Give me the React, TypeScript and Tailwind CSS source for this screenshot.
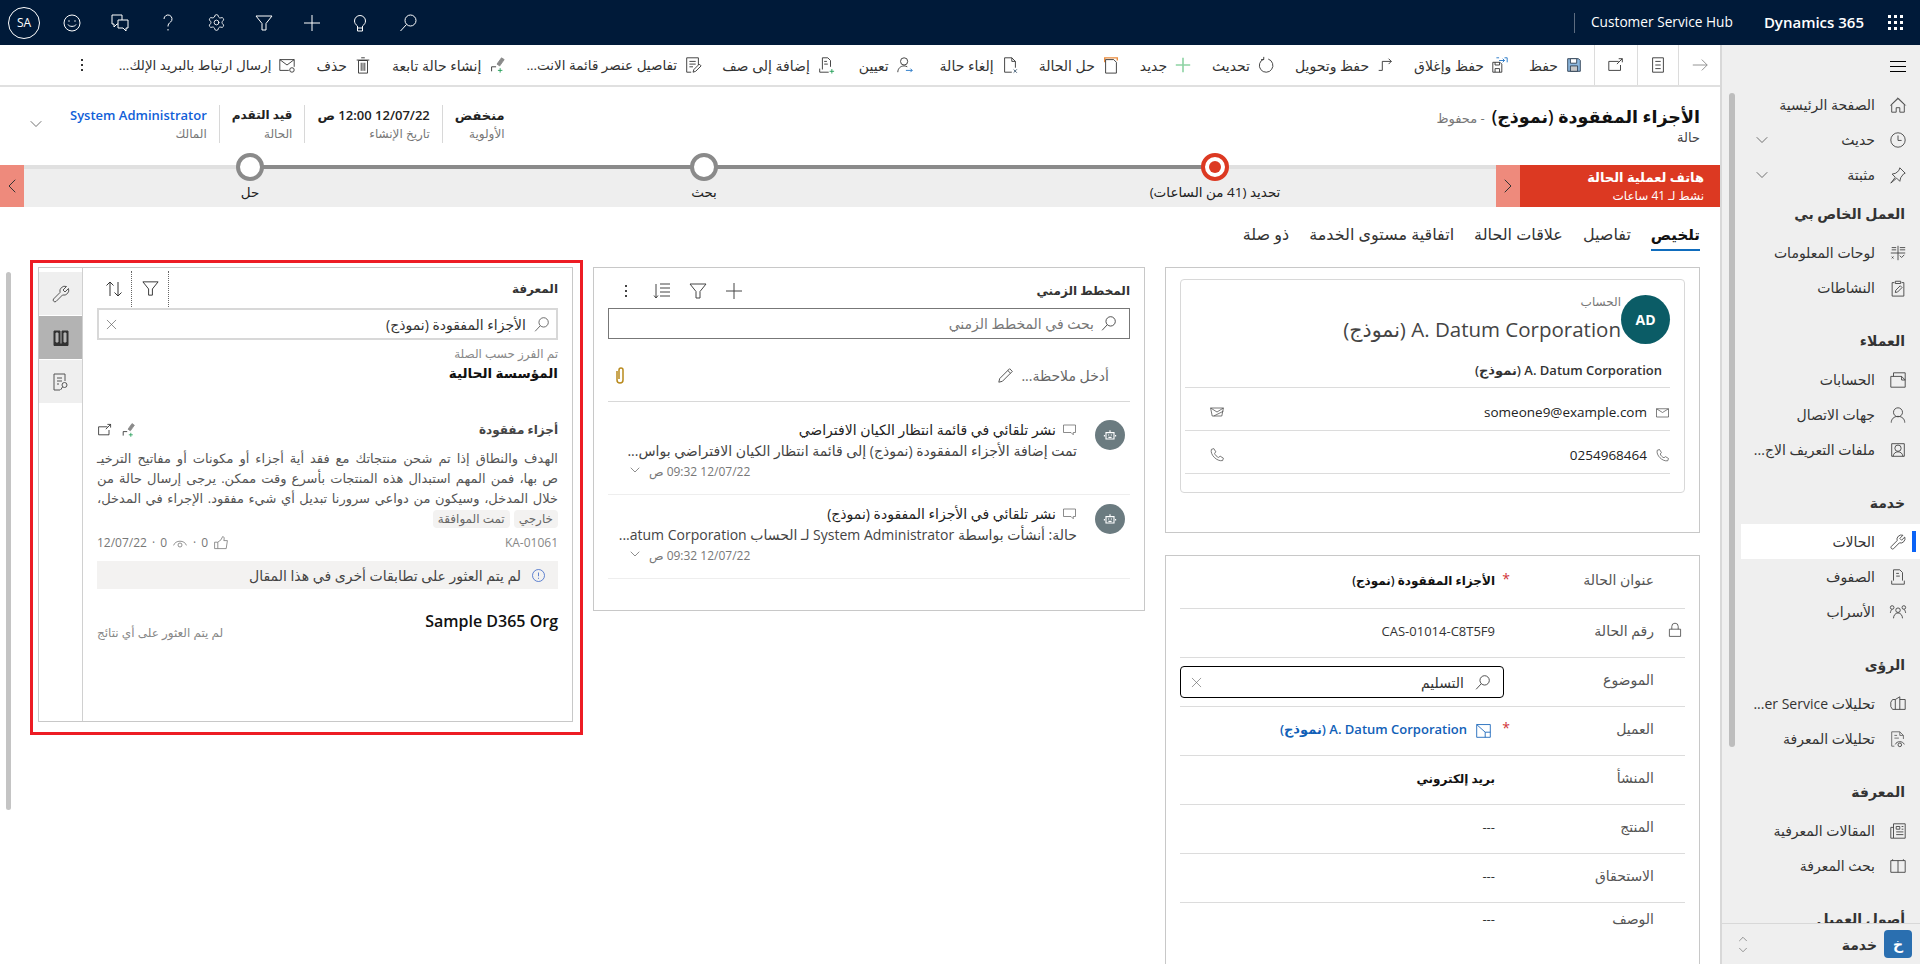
import type { ReactNode } from "react";
import { ChevronDown, ChevronLeft, ChevronRight, ChevronUp, Settings } from "lucide-react";

type IconProps = { className?: string };

const Ico = ({ className = "size-4", children }: IconProps & { children: ReactNode }) => (
  <svg viewBox="0 0 20 20" fill="none" stroke="currentColor" strokeWidth="1" className={`shrink-0 ${className}`}>
    {children}
  </svg>
);

// shell icons
const SearchIcon = (p: IconProps) => <Ico {...p}><circle cx="12.5" cy="7.5" r="5.5" /><path d="M8.5 11.5L2.5 18" /></Ico>;
const CloseIcon = (p: IconProps) => <Ico {...p}><path d="M3 3l14 14M17 3L3 17" /></Ico>;
const FilterIcon = (p: IconProps) => <Ico {...p}><path d="M2 3h16l-6 7.5V17H8v-6.5z" /></Ico>;
const PlusIcon = (p: IconProps) => <Ico {...p}><path d="M10 2v16M2 10h16" /></Ico>;
const SmileIcon = (p: IconProps) => <Ico {...p}><circle cx="10" cy="10" r="8" /><path d="M6 11.5c1 2.500 7 2.500 8 0" /><path d="M7 7.500v1M13 7.500v1" strokeWidth="1.5" /></Ico>;
const FeedbackIcon = (p: IconProps) => <Ico {...p}><path d="M12 7V2H2v9h2v3l3-3h1" /><path d="M8 7h10v8h-2v3l-3-3H8z" /></Ico>;
const QuestionIcon = (p: IconProps) => <Ico {...p}><path d="M6 6a4 4 0 1 1 6.500 3.100C11 10.300 10 11.200 10 13.500M10 16v1.500" /></Ico>;
const BulbIcon = (p: IconProps) => <Ico {...p}><path d="M7.500 13C5.500 11.500 4.500 9.800 4.500 8a5.500 5.500 0 0 1 11 0c0 1.800-1 3.500-3 5v5h-5z" /><path d="M7.500 15h5" /></Ico>;
const GridDots = () => (
  <div className="grid grid-cols-3 gap-[3px]">
    {Array.from({ length: 9 }).map((_, i) => <span key={i} className="size-[3px] bg-white" />)}
  </div>
);

// command bar icons
const SaveIcon = (p: IconProps) => <Ico {...p}><path d="M3 3h12l2 2v12H3z" fill="#8db8df" stroke="#2e3f52" /><path d="M6 3h7v5H6z" fill="#fff" stroke="#2e3f52" /><path d="M6 11h8v6H6z" fill="#c8c8c8" stroke="#2e3f52" /></Ico>;
const SaveCloseIcon = (p: IconProps) => <Ico {...p}><path d="M2 7h8l2 2v9H2z" /><path d="M4.500 7v3h5V7M4.500 18v-4h5v4" /><path d="M6 2h3M15 2h3v5M9 5h6M13 3l2 2-2 2" stroke="#1f73c5" /></Ico>;
const RouteIcon = (p: IconProps) => <Ico {...p}><path d="M3 16h4V6h10M14 3l3 3-3 3" /></Ico>;
const RefreshIcon = (p: IconProps) => <Ico {...p}><path d="M12.500 3.400a7.500 7.500 0 1 1-5 .1M7.500 1v3h-3" /></Ico>;
const NewIcon = (p: IconProps) => <Ico {...p}><path d="M10 2v16M2 10h16" stroke="#8ed3a4" strokeWidth="1.800" /></Ico>;
const ResolveIcon = (p: IconProps) => <Ico {...p}><path d="M3 7V2h14v3" stroke="#ea8a3a" strokeWidth="1.500" /><path d="M4 4h9l3 3v12H4z" /></Ico>;
const CancelIcon = (p: IconProps) => <Ico {...p}><path d="M12 18H4V2h8l4 4v7M12 2v4h4" /><path d="M14 15l3.500 3.500M17.500 15L14 18.500" stroke="#38536d" /></Ico>;
const AssignIcon = (p: IconProps) => <Ico {...p}><circle cx="9" cy="6" r="4" /><path d="M2 18c0-4 3-7 7-7 1.500 0 2.500.4 3.500 1" /><path d="M11 16h7M16 14l2 2-2 2" stroke="#1f73c5" /></Ico>;
const QueueIcon = (p: IconProps) => <Ico {...p}><path d="M6 15V2h6l3 3v7M8 6h3M8 9h4" /><path d="M3 14v4h10" /><path d="M14 17h5M16.500 14.500v5" stroke="#1f9d55" /></Ico>;
const DetailsIcon = (p: IconProps) => <Ico {...p}><path d="M8 18H3V2h13v8M6 6h7M6 9h7M6 12h4" /><path d="M10 18l1-3 6-6 2 2-6 6z" /></Ico>;
const ChildIcon = (p: IconProps) => <Ico {...p}><path d="M10 9l5-7 3 2-5 7z" fill="#8a8a8a" stroke="#8a8a8a" /><path d="M4 17v-5h5" /><path d="M11 16h5M13.500 13.500v5" stroke="#1f9d55" /></Ico>;
const TrashIcon = (p: IconProps) => <Ico {...p}><path d="M5 5h10v14H5zM3 4.500h14M8 2h4M8 7.500v9M10 7.500v9M12 7.500v9" /></Ico>;
const MailLinkIcon = (p: IconProps) => <Ico {...p}><path d="M12 16H2V4h16v8M2 4l8 6 8-6" /><circle cx="15.500" cy="15.500" r="2.500" /></Ico>;
const FormIcon = (p: IconProps) => <Ico {...p}><path d="M4 2h12v16H4zM7 6h6M7 10h6M7 14h6" /></Ico>;
const PopoutIcon = (p: IconProps) => <Ico {...p}><path d="M13 6H2v10h13v-6M11 9l6-6M13 3h4v4" /></Ico>;
const ForwardIcon = (p: IconProps) => <Ico {...p}><path d="M2 10h16M12 4l6 6-6 6" /></Ico>;

// sidebar icons
const HomeIcon = (p: IconProps) => <Ico {...p}><path d="M10 3L3 9.500V18h5v-5h4v5h5V9.500zM1.500 10.500L10 2l8.500 8.500" /></Ico>;
const ClockIcon = (p: IconProps) => <Ico {...p}><circle cx="10" cy="10" r="8" /><path d="M10 5v5.500h4" /></Ico>;
const PinIcon = (p: IconProps) => <Ico {...p}><path d="M12 2l6 6-2 1-3 4-1 4-3.500-3.500L2 19l5-6.500L3.500 9l4-1 3.500-3z" /></Ico>;
const DashIcon = (p: IconProps) => <Ico {...p}><path d="M10 2v16M2 10h16M3 4h5M3 6.500h5M12 4h6M12 6.500h6M12 13l2 2 3-3M3 14l2 2M5 14l-2 2" /></Ico>;
const ClipboardIcon = (p: IconProps) => <Ico {...p}><path d="M6 4H3.500v15h13V4H14M7 2.500h6V5H7zM7 15l.5-2.500 5-5 2 2-5 5z" /></Ico>;
const AccountsIcon = (p: IconProps) => <Ico {...p}><path d="M2 6h12l4 4v8H2zM5 6V2h13v8M14 6v4h4" /></Ico>;
const ContactIcon = (p: IconProps) => <Ico {...p}><circle cx="10" cy="7" r="5" /><path d="M2.500 18.500c0-4 3-7 7.500-7s7.500 3 7.500 7" /></Ico>;
const ProfileIcon = (p: IconProps) => <Ico {...p}><path d="M3 3h14v14H3z" /><circle cx="10" cy="8" r="3.500" /><path d="M4.500 17c.5-3 2.500-5 5.500-5s5 2 5.500 5" /></Ico>;
const WrenchIcon = (p: IconProps) => <Ico {...p}><path d="M17.500 4.500L14 8l-2-2 3.500-3.500A5 5 0 0 0 9 8.500L2.500 15a1.800 1.800 0 0 0 2.500 2.500l6.500-6.500a5 5 0 0 0 6-6.500z" /></Ico>;
const QueuesIcon = (p: IconProps) => <Ico {...p}><path d="M5 14V2h7l3 3v9M8 6h3M8 9h4M3 14v4h14v-4" /></Ico>;
const SwarmIcon = (p: IconProps) => <Ico {...p}><circle cx="10" cy="8" r="2.500" /><circle cx="3.500" cy="5" r="2" /><circle cx="16.500" cy="5" r="2" /><path d="M5 17c0-3 2-6 5-6s5 3 5 6M1.500 11c.3-2 1-3.500 2-4M18.500 11c-.3-2-1-3.500-2-4" /></Ico>;
const InsightIcon = (p: IconProps) => <Ico {...p}><path d="M7 5l5-3v14M7 5H4l-2 3v5l2 3h14V5h-6M7 5v11" /></Ico>;
const DocEyeIcon = (p: IconProps) => <Ico {...p}><path d="M6 18H3V2h9l4 4v4M12 2v4h4M6 6h3M6 9h5" stroke="#666" /><path d="M7 16c1.500-4 8.500-4 10 0" /><circle cx="12" cy="16.500" r="2" /></Ico>;
const ArticlesIcon = (p: IconProps) => <Ico {...p}><path d="M5 2h13v16H5zM5 6H2v12h3M8 5h4v3H8zM14 5h2M14 8h2M8 11h8M8 14h8" /></Ico>;
const BookIcon = (p: IconProps) => <Ico {...p}><path d="M10 4H2v13h8zM10 4h8v13h-8M4 2.500v1.500M16 2.500v1.500" /></Ico>;

// record icons
const PhoneIcon = (p: IconProps) => <Ico {...p}><path d="M3 3l3-1 2.500 4L7 8c.5 2 3 4.500 5 5l2-1.500 4 2.500-1 3c-7 1.500-16-7.500-14-14z" /></Ico>;
const MailIcon = (p: IconProps) => <Ico {...p}><path d="M2 5h16v11H2zM2 5l8 5 8-5" /></Ico>;
const EmailSendIcon = (p: IconProps) => <Ico {...p}><path d="M2 5h16l-2 10H4zM2 5l8 5 8-5M6 15l12-6" /></Ico>;
const LockIcon = (p: IconProps) => <Ico {...p}><path d="M3 9h14v9H3zM6 9V5.500a4 4 0 0 1 8 0V9" /></Ico>;
const LookupIcon = (p: IconProps) => <Ico {...p}><path d="M2 3h16v15H2zM2 3l10 9h6M12 12v6" /></Ico>;
const SortIcon = (p: IconProps) => <Ico {...p}><path d="M6 17V3M2.500 6.500L6 3l3.500 3.500M14 3v14M10.500 13.500L14 17l3.500-3.500" /></Ico>;
const TimelineSortIcon = (p: IconProps) => <Ico {...p}><path d="M8 3h10M8 7h10M8 11h10M8 15h10M4 3v14M2 14.500L4 17l2-2.500" /></Ico>;
const PencilIcon = (p: IconProps) => <Ico {...p}><path d="M3 14L14 3l3 3L6 17l-4 1zM12 5l3 3" /></Ico>;
const ClipIcon = (p: IconProps) => <Ico {...p}><path d="M7 6v9a3 3 0 0 0 6 0V5a2 2 0 0 0-4 0v9" stroke="#b98a1d" strokeWidth="1.500" /></Ico>;
const ChatIcon = (p: IconProps) => <Ico {...p}><path d="M2 4h16v10h-3v3l-3-3H2z" /></Ico>;
const BotIcon = (p: IconProps) => <Ico {...p}><path d="M5 7h10v8H5zM10 4v3M3 10v2M17 10v2" stroke="#fff" strokeWidth="1.400" /><path d="M7.500 10h1.500M11 10h1.500M8 13h4" stroke="#fff" strokeWidth="1.400" /></Ico>;
const InfoIcon = (p: IconProps) => <Ico {...p}><circle cx="10" cy="10" r="8" stroke="#2f5ec4" /><path d="M10 6v5M10 13v1.500" stroke="#2f5ec4" /></Ico>;
const EyeIcon = (p: IconProps) => <Ico {...p}><path d="M2 13c2-7 14-7 16 0" /><circle cx="10" cy="12.500" r="2.500" /></Ico>;
const ThumbIcon = (p: IconProps) => <Ico {...p}><path d="M6 17H2V9h4zM6 9l4-3 2-4c2 0 2.500 2 1.500 5H18l-1.500 10H6" /></Ico>;
const BookTabIcon = (p: IconProps) => <Ico {...p}><path d="M3 3h6v13H3zM11 3h6v13h-6zM3 16h14v1.500H3z" fill="#333" stroke="#333" /><path d="M5 5h2v9H5zM13 5h2v9h-2z" fill="#b3b3b3" stroke="#b3b3b3" /></Ico>;
const SearchDocIcon = (p: IconProps) => <Ico {...p}><path d="M9 18H3V2h11v7M6 6h5M6 9h5M6 12h2" /><circle cx="13.500" cy="13" r="2.500" /><path d="M11.500 15l-2 3" /></Ico>;

const commands: { label: string; icon: (p: IconProps) => ReactNode; cls?: string }[] = [
  { label: "حفظ", icon: SaveIcon },
  { label: "حفظ وإغلاق", icon: SaveCloseIcon },
  { label: "حفظ وتحويل", icon: RouteIcon },
  { label: "تحديث", icon: RefreshIcon },
  { label: "جديد", icon: NewIcon },
  { label: "حل الحالة", icon: ResolveIcon },
  { label: "إلغاء حالة", icon: CancelIcon },
  { label: "تعيين", icon: AssignIcon, cls: "ms-[6px]" },
  { label: "إضافة إلى صف", icon: QueueIcon, cls: "ms-[4px]" },
  { label: "تفاصيل عنصر قائمة الانت...", icon: DetailsIcon, cls: "text-[13.5px]" },
  { label: "إنشاء حالة تابعة", icon: ChildIcon },
  { label: "حذف", icon: TrashIcon },
  { label: "إرسال ارتباط بالبريد الإلك...", icon: MailLinkIcon, cls: "text-[13.5px]" },
];

type NavItem = { label: string; icon: (p: IconProps) => ReactNode; chevron?: boolean; active?: boolean };
type NavGroup = { title?: string; items: NavItem[] };

const nav: NavGroup[] = [
  {
    items: [
      { label: "الصفحة الرئيسية", icon: HomeIcon },
      { label: "حديث", icon: ClockIcon, chevron: true },
      { label: "مثبتة", icon: PinIcon, chevron: true },
    ],
  },
  {
    title: "العمل الخاص بي",
    items: [
      { label: "لوحات المعلومات", icon: DashIcon },
      { label: "النشاطات", icon: ClipboardIcon },
    ],
  },
  {
    title: "العملاء",
    items: [
      { label: "الحسابات", icon: AccountsIcon },
      { label: "جهات الاتصال", icon: ContactIcon },
      { label: "ملفات التعريف الاج...", icon: ProfileIcon },
    ],
  },
  {
    title: "خدمة",
    items: [
      { label: "الحالات", icon: WrenchIcon, active: true },
      { label: "الصفوف", icon: QueuesIcon },
      { label: "الأسراب", icon: SwarmIcon },
    ],
  },
  {
    title: "الرؤى",
    items: [
      { label: "تحليلات er Service...", icon: InsightIcon },
      { label: "تحليلات المعرفة", icon: DocEyeIcon },
    ],
  },
  {
    title: "المعرفة",
    items: [
      { label: "المقالات المعرفية", icon: ArticlesIcon },
      { label: "بحث المعرفة", icon: BookIcon },
    ],
  },
  { title: "أصول العميل", items: [] },
];

const TopBar = () => (
  <div dir="ltr" className="flex h-[45px] shrink-0 items-center bg-[#001a39] text-white">
    <div className="flex h-full w-[48px] items-center justify-center">
      <div className="flex size-[32px] items-center justify-center rounded-full border border-white text-[12px]">SA</div>
    </div>
    {[SmileIcon, FeedbackIcon, QuestionIcon].map((I, i) => (
      <div key={i} className="flex h-full w-[48px] items-center justify-center"><I className="size-[20px]" /></div>
    ))}
    <div className="flex h-full w-[48px] items-center justify-center"><Settings strokeWidth={1.1} className="size-[19px]" /></div>
    {[FilterIcon, PlusIcon, BulbIcon, SearchIcon].map((I, i) => (
      <div key={i} className="flex h-full w-[48px] items-center justify-center"><I className="size-[20px]" /></div>
    ))}
    <div className="flex-1" />
    <div className="h-[20px] w-px bg-[#5d6c80]" />
    <span className="ms-4 text-[13.7px]">Customer Service Hub</span>
    <span className="ms-[31px] text-[15px] font-semibold">Dynamics 365</span>
    <div className="ms-[24px] me-[17px]"><GridDots /></div>
  </div>
);

const CommandBar = () => (
  <div className="flex h-[42px] shrink-0 items-center border-b-2 border-[#e0e0e0] text-[14px] text-[#333]">
    <div className="flex h-full w-[42px] items-center justify-center border-e border-[#dcdcdc] text-[#888]"><ForwardIcon className="size-[18px]" /></div>
    <div className="flex h-full w-[41px] items-center justify-center border-e border-[#dcdcdc]"><FormIcon className="size-[18px]" /></div>
    <div className="flex h-full w-[43px] items-center justify-center border-e border-[#dcdcdc]"><PopoutIcon className="size-[18px]" /></div>
    <div className="flex items-center ps-[1px]">
      {commands.map(({ label, icon, cls }) => (
        <div key={label} className={`flex items-center gap-[7px] px-[10px] whitespace-nowrap ${cls ?? ""}`}>
          {icon({ className: "size-[18px]" })}
          <span>{label}</span>
        </div>
      ))}
    </div>
    <div className="me-[81px] ms-auto flex flex-col gap-[3px]">
      {[0, 1, 2].map((i) => <span key={i} className="size-[2px] bg-[#333]" />)}
    </div>
  </div>
);

const HeaderField = ({ value, label, tone = "text-[13px] text-[#222]", last }: { value: string; label: string; tone?: string; last?: boolean }) => (
  <div className={`flex h-[38px] flex-col justify-center px-[12px] ${last ? "" : "border-e border-[#d8d8d8]"}`}>
    <span className={`font-semibold leading-[20px] whitespace-nowrap ${tone}`}>{value}</span>
    <span className="text-[12px] leading-[18px] text-[#777]">{label}</span>
  </div>
);

const RecordHeader = () => (
  <div className="flex h-[78px] shrink-0 items-center justify-between ps-5 pe-[26px]">
    <div className="-mt-[5px]">
      <div className="flex items-baseline gap-[7px] whitespace-nowrap">
        <span className="text-[17.5px] font-semibold leading-[26px] text-[#111]">الأجزاء المفقودة (نموذج)</span>
        <span className="text-[13px] text-[#777]">- محفوظ</span>
      </div>
      <div className="text-[13px] font-medium leading-[16px] text-[#444]">حالة</div>
    </div>
    <div className="-mt-[4px] flex items-center">
      <HeaderField value="منخفض" label="الأولوية" />
      <HeaderField value="12/07/22 12:00 ص" label="تاريخ الإنشاء" />
      <HeaderField value="قيد التقدم" label="الحالة" tone="text-[12px] text-[#222]" />
      <HeaderField value="System Administrator" label="المالك" tone="text-[13px] text-[#1160d8]" last />
      <ChevronDown strokeWidth={1} className="ms-[12px] size-5 text-[#555]" />
    </div>
  </div>
);

const Stage = ({ label, active, className }: { label: string; active?: boolean; className: string }) => (
  <div className={`relative z-10 flex flex-col items-center ${className}`}>
    {active ? (
      <div className="-mt-[12px] flex size-[28px] items-center justify-center rounded-full border-[4px] border-[#dc3922] bg-white">
        <div className="size-[12px] rounded-full bg-[#dc3922]" />
      </div>
    ) : (
      <div className="-mt-[12px] size-[28px] rounded-full border-[4px] border-[#8a8a8a] bg-white" />
    )}
    <span className="mt-[3px] text-[13.5px] font-medium leading-[17px] whitespace-nowrap text-[#222]">{label}</span>
  </div>
);

const ProcessBar = () => (
  <div className="flex h-[42px] shrink-0 bg-[#eeeeee]">
    <div className="flex w-[200px] shrink-0 flex-col justify-center bg-[#dc3922] ps-4 text-white">
      <span className="text-[13px] font-bold leading-[20px]">هاتف لعملية الحالة</span>
      <span className="text-[12px] leading-[18px]">نشط لـ 41 ساعات</span>
    </div>
    <div className="flex w-[24px] shrink-0 items-center justify-center bg-[#ee8a7c] text-[#333]"><ChevronRight strokeWidth={1} className="size-6" /></div>
    <div className="relative flex w-[1472px] shrink-0">
      <div className="absolute inset-x-0 top-0 h-[4px] bg-[#e0e0e0]" />
      <div className="absolute left-[226px] top-0 h-[4px] w-[965px] bg-[#8a8a8a]" />
      <Stage label="تحديد  (41 من الساعات)" active className="w-[562px]" />
      <Stage label="بحث" className="w-[460px]" />
      <Stage label="حل" className="w-[448px]" />
    </div>
    <div className="flex w-[24px] shrink-0 items-center justify-center bg-[#ee8a7c] text-[#333]"><ChevronLeft strokeWidth={1} className="size-6" /></div>
  </div>
);

const Tabs = () => (
  <div className="flex h-[48px] shrink-0 items-start gap-[20px] ps-5 pt-[13px] text-[16px] leading-[28px] text-[#333]">
    <span className="border-b-2 border-[#0f6cbd] pb-[1px] text-[15px] font-semibold text-[#111]">تلخيص</span>
    <span>تفاصيل</span>
    <span>علاقات الحالة</span>
    <span>اتفاقية مستوى الخدمة</span>
    <span>ذو صلة</span>
  </div>
);

const ContactRow = ({ icon, value, action }: { icon: ReactNode; value: string; action: ReactNode }) => (
  <div className="flex h-[43px] items-center border-t border-[#dcdcdc] pt-[6px] text-[#555]">
    {icon}
    <span className="ms-[8px] text-[13.5px] font-medium text-[#222]">{value}</span>
    <span className="ms-auto me-[24px]">{action}</span>
  </div>
);

const AccountCard = () => (
  <div className="h-[266px] border border-[#c8c8c8] pt-[11px] px-[14px]">
    <div className="h-[214px] rounded border border-[#d8d8d8] ps-[14px] pe-[4px] pt-[14px]">
      <div className="flex items-start">
        <div className="mt-[1px] flex h-[49px] w-[49px] items-center justify-center rounded-full bg-[#0b5c66] text-[14px] font-bold text-white">AD</div>
        <div>
          <div className="text-[12px] leading-[16px] text-[#777]">الحساب</div>
          <div className="mt-[5px] text-[20.5px] leading-[28px] text-[#444]">A. Datum Corporation (نموذج)</div>
        </div>
      </div>
      <div className="ps-[8px] pt-[17px] pb-[8px] text-[13px] font-semibold leading-[18px] text-[#333]">A. Datum Corporation (نموذج)</div>
      <ContactRow icon={<MailIcon className="size-[15px]" />} value="someone9@example.com" action={<EmailSendIcon className="size-[16px]" />} />
      <ContactRow icon={<PhoneIcon className="size-[15px]" />} value="0254968464" action={<PhoneIcon className="size-[16px]" />} />
      <div className="border-t border-[#dcdcdc]" />
    </div>
  </div>
);

const fieldRows: { label: string; value?: string; lock?: boolean; req?: boolean; kind?: string; h?: string }[] = [
  { label: "عنوان الحالة", value: "الأجزاء المفقودة (نموذج)", req: true, kind: "bold", h: "h-[53px]" },
  { label: "رقم الحالة", value: "CAS-01014-C8T5F9", lock: true },
  { label: "الموضوع", kind: "input" },
  { label: "العميل", value: "A. Datum Corporation (نموذج)", req: true, kind: "link" },
  { label: "المنشأ", value: "بريد إلكتروني", kind: "bold" },
  { label: "المنتج", value: "---" },
  { label: "الاستحقاق", value: "---" },
  { label: "الوصف", value: "---", h: "h-[36px]" },
];

const FieldsCard = () => (
  <div className="mt-[22px] h-[420px] border border-b-0 border-[#c8c8c8] px-[14px]">
    {fieldRows.map((row) => (
      <div key={row.label} className={`flex items-center border-b border-[#dcdcdc] last:border-b-0 ${row.h ?? "h-[49px]"}`}>
        <div className="flex w-[31px] ps-[2px] text-[#444]">{row.lock && <LockIcon className="mb-[6px] size-[16px]" />}</div>
        <div className="w-[137px] pb-[6px] text-[14px] text-[#555]">{row.label}</div>
        <div className="w-[22px] pb-[6px] text-center text-[14px] leading-[10px] text-[#d13438]">{row.req && "*"}</div>
        {row.kind === "input" ? (
          <div className="-ms-[9px] flex h-[32px] flex-1 items-center rounded-sm border border-black ps-[12px] pe-[9px] text-[14px] text-[#333]">
            <SearchIcon className="me-[10px] size-[17px]" />
            <span>التسليم</span>
            <CloseIcon className="ms-auto size-[13px] text-[#666]" />
          </div>
        ) : row.kind === "link" ? (
          <div className="flex items-center ps-[3px] pb-[2px] text-[13px] font-semibold text-[#1160b7]">
            <LookupIcon className="me-[8px] size-[17px]" />
            <span>{row.value}</span>
          </div>
        ) : (
          <div className={`pb-[2px] ${row.kind === "bold" ? "text-[12px] font-semibold text-[#111]" : "text-[13px] font-medium text-[#333]"}`}>{row.value}</div>
        )}
      </div>
    ))}
  </div>
);

const TimelineItem = ({ title, text }: { title: string; text: string }) => (
  <div className="flex h-[84px] border-b border-[#eeeeee] ps-[5px]">
    <div className="mt-[9px] flex size-[30px] shrink-0 items-center justify-center rounded-full bg-[#6b7b80]"><BotIcon className="size-[16px]" /></div>
    <div className="ms-[18px] min-w-0 flex-1">
      <div className="mt-[8px] flex items-center gap-[6px] text-[14px] font-medium leading-[21px] text-[#222]">
        <ChatIcon className="size-[15px] text-[#666]" />
        <span>{title}</span>
      </div>
      <div className="text-[14px] leading-[21px] text-[#444] whitespace-nowrap">{text}</div>
      <div className="flex items-center justify-end gap-[6px] pe-[19px] text-[12px] leading-[22px] text-[#777]">
        <span>12/07/22 09:32 ص</span>
        <ChevronDown strokeWidth={1} className="-mt-1 size-[16px] text-[#555]" />
      </div>
    </div>
  </div>
);

const TimelinePanel = () => (
  <div className="mt-[7px] h-[344px] w-[552px] shrink-0 border border-[#c8c8c8] px-[14px]">
    <div className="flex h-[40px] items-center pt-[5px] text-[#444]">
      <span className="text-[12px] font-semibold text-[#333]">المخطط الزمني</span>
      <div className="ms-auto flex items-center gap-[16px] pe-[8px]">
        <PlusIcon className="size-[20px]" />
        <FilterIcon className="size-[20px]" />
        <TimelineSortIcon className="size-[20px]" />
        <div className="mx-[9px] flex flex-col gap-[3px]">
          {[0, 1, 2].map((i) => <span key={i} className="size-[2px] bg-[#444]" />)}
        </div>
      </div>
    </div>
    <div className="flex h-[31px] items-center gap-[6px] border border-[#777] px-[12px] text-[14px] text-[#777]">
      <SearchIcon className="size-[17px] text-[#333]" />
      <span>بحث في المخطط الزمني</span>
    </div>
    <div className="flex h-[63px] items-center border-b border-[#d8d8d8] ps-[21px] pe-[2px] pt-[10px] text-[14px] text-[#666]">
      <span>أدخل ملاحظة...</span>
      <PencilIcon className="ms-[6px] size-[18px] text-[#444]" />
      <ClipIcon className="ms-auto size-[20px]" />
    </div>
    <div className="pt-[9px]">
      <TimelineItem title="نشر تلقائي في قائمة انتظار الكيان الافتراضي" text="تمت إضافة الأجزاء المفقودة (نموذج) إلى قائمة انتظار الكيان الافتراضي بواس..." />
      <TimelineItem title="نشر تلقائي في الأجزاء المفقودة (نموذج)" text="حالة: أنشأت بواسطة System Administrator لـ الحساب atum Corporation..." />
    </div>
  </div>
);

const KnowledgePanel = () => (
  <div className="shrink-0 border-[3px] border-[#ed1c24] ps-[7px] pe-[5px] pt-[4px] pb-[10px]">
    <div className="flex h-[455px] w-[535px] border border-[#c8c8c8]">
      <div className="min-w-0 flex-1 px-[14px]">
        <div className="flex h-[40px] items-center pt-[1px]">
          <span className="text-[12px] font-semibold text-[#333]">المعرفة</span>
          <div className="ms-auto flex h-[36px] text-[#333]">
            <div className="flex w-[38px] items-center justify-center border-x border-dotted border-[#666]"><FilterIcon className="size-[19px]" /></div>
            <div className="flex w-[34px] items-center justify-center"><SortIcon className="size-[20px]" /></div>
          </div>
        </div>
        <div className="flex h-[32px] items-center gap-[7px] border-2 border-[#d8d8d8] px-[6px] text-[14px] text-[#333]">
          <SearchIcon className="size-[17px] text-[#555]" />
          <span>الأجزاء المفقودة (نموذج)</span>
          <CloseIcon className="ms-auto size-[13px] text-[#555]" />
        </div>
        <div className="mt-[6px] text-[12px] leading-[16px] text-[#888]">تم الفرز حسب الصلة</div>
        <div className="text-[13.5px] font-semibold leading-[22px] text-[#111]">المؤسسة الحالية</div>
        <div className="mt-[36px] flex items-center">
          <span className="text-[12px] font-bold leading-[20px] text-[#444]">أجزاء مفقودة</span>
          <div className="ms-auto flex items-center gap-[7px] text-[#222]">
            <ChildIcon className="size-[16px]" />
            <PopoutIcon className="size-[16px]" />
          </div>
        </div>
        <div className="mt-[8px] text-[13px] leading-[20px] text-[#555] [text-align-last:justify]">
          <div className="whitespace-nowrap">الهدف والنطاق إذا تم شحن منتجاتك مع فقد أية أجزاء أو مكونات أو مفاتيح الترخيـ</div>
          <div className="whitespace-nowrap">ص بها، فمن المهم استبدال هذه المنتجات بأسرع وقت ممكن. يرجى إرسال حالة من</div>
          <div className="whitespace-nowrap">خلال المدخل، وسيكون من دواعي سرورنا تبديل أي شيء مفقود. الإجراء في المدخل،</div>
        </div>
        <div className="mt-[2px] flex gap-[4px] text-[12px] leading-[18px] text-[#666]">
          <span className="rounded-sm bg-[#f3f2f1] px-[5px]">خارجي</span>
          <span className="rounded-sm bg-[#f3f2f1] px-[5px]">تمت الموافقة</span>
        </div>
        <div className="mt-[6px] flex items-center justify-between text-[12px] leading-[18px] text-[#888]">
          <span>KA-01061</span>
          <div dir="ltr" className="flex items-center gap-[5px] text-[#777]">
            <span>12/07/22</span><span>·</span><span>0</span><EyeIcon className="size-[16px]" /><span>·</span><span>0</span><ThumbIcon className="size-[16px]" />
          </div>
        </div>
        <div className="mt-[9px] flex h-[28px] items-center gap-[10px] bg-[#f3f2f1] ps-[12px] text-[14px] text-[#444]">
          <InfoIcon className="size-[15px]" />
          <span>لم يتم العثور على تطابقات أخرى في هذا المقال</span>
        </div>
        <div className="mt-[21px] flex items-start justify-between">
          <span className="text-[16px] font-semibold leading-[22px] text-[#111]">Sample D365 Org</span>
          <span className="mt-[15px] text-[12px] leading-[16px] text-[#888]">لم يتم العثور على أي نتائج</span>
        </div>
      </div>
      <div className="flex w-[44px] shrink-0 flex-col gap-[1px] border-s border-[#d0d0d0] pt-[4px]">
        <div className="flex h-[43px] items-center justify-center bg-[#efefef] text-[#555]"><WrenchIcon className="size-[20px]" /></div>
        <div className="flex h-[43px] items-center justify-center bg-[#b3b3b3]"><BookTabIcon className="size-[20px]" /></div>
        <div className="flex h-[43px] items-center justify-center bg-[#efefef] text-[#555]"><SearchDocIcon className="size-[20px]" /></div>
      </div>
    </div>
  </div>
);

const Sidebar = () => (
  <aside className="relative flex w-[200px] shrink-0 flex-col border-e-2 border-[#d8d8d8] bg-[#efefef] text-[14px] text-[#333]">
    <div className="flex h-[42px] shrink-0 flex-col justify-center gap-[4px] px-[14px]">
      {[0, 1, 2].map((i) => <span key={i} className="h-px w-[16px] bg-black" />)}
    </div>
    <div className="min-h-0 flex-1 overflow-hidden">
      {nav.map((group, i) => (
        <div key={i}>
          {group.title && (
            <div className={`flex h-[35px] items-center ps-[15px] font-semibold text-[#333] ${i === 1 ? "mt-[4px]" : "mt-[18px]"} mb-[4px]`}>{group.title}</div>
          )}
          {group.items.map((item) => (
            <div key={item.label} className={`relative flex h-[35px] items-center ps-[13px] ${item.active ? "me-[19px] bg-white" : ""}`}>
              {item.active && <span className="absolute right-[4px] top-[7px] h-[21px] w-[4px] bg-[#0b63f6]" />}
              {item.icon({ className: "size-[18px] text-[#444]" })}
              <span className="ms-[14px] whitespace-nowrap">{item.label}</span>
              {item.chevron && <ChevronDown strokeWidth={1} className="ms-auto me-[30px] size-[20px] text-[#555]" />}
            </div>
          ))}
        </div>
      ))}
    </div>
    <div className="flex h-[41px] shrink-0 items-center border-t border-[#d8d8d8] bg-[#efefef] ps-[8px]">
      <div className="flex size-[28px] items-center justify-center rounded-sm bg-[#2a6fb0] text-[14px] font-bold text-white">خ</div>
      <span className="ms-[7px] font-semibold">خدمة</span>
      <div className="ms-auto me-[14px] flex flex-col text-[#555]">
        <ChevronUp strokeWidth={1} className="-mb-[3px] size-[14px]" />
        <ChevronDown strokeWidth={1} className="size-[14px]" />
      </div>
    </div>
    <div className="absolute left-[7px] top-[48px] h-[654px] w-[6px] rounded-full bg-[#bdbdbd]" />
  </aside>
);

export default function App() {
  return (
    <div dir="rtl" className="flex h-[964px] w-[1920px] flex-col overflow-hidden bg-white font-['Open_Sans','DejaVu_Sans',sans-serif]">
      <TopBar />
      <div className="flex min-h-0 flex-1">
        <Sidebar />
        <main className="relative flex w-[1720px] shrink-0 flex-col">
          <CommandBar />
          <RecordHeader />
          <ProcessBar />
          <Tabs />
          <div className="mt-[5px] flex items-start ps-5">
            <div className="mt-[7px] w-[535px] shrink-0">
              <AccountCard />
              <FieldsCard />
            </div>
            <div className="ms-5"><TimelinePanel /></div>
            <div className="ms-[10px]"><KnowledgePanel /></div>
          </div>
          <div className="absolute left-[6px] top-[227px] h-[538px] w-[5px] rounded-full bg-[#c4c4c4]" />
        </main>
      </div>
    </div>
  );
}
